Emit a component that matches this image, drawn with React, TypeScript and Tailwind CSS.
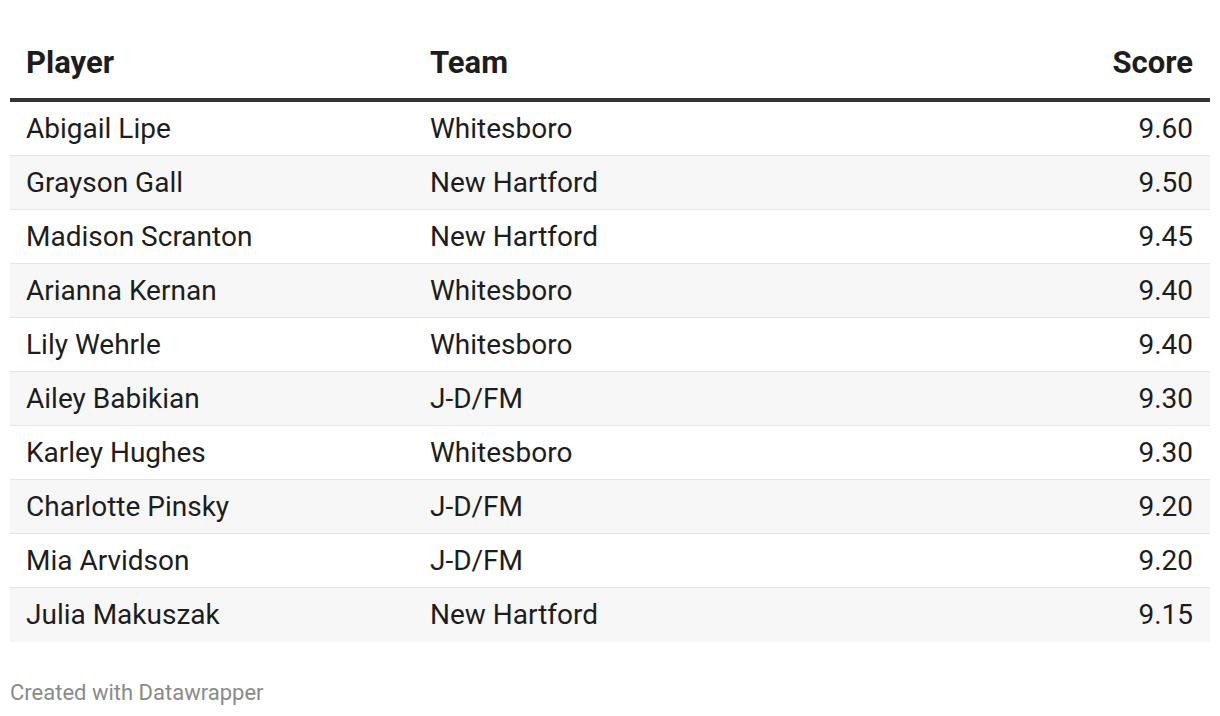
const rows = [
  ["Abigail Lipe", "Whitesboro", "9.60"],
  ["Grayson Gall", "New Hartford", "9.50"],
  ["Madison Scranton", "New Hartford", "9.45"],
  ["Arianna Kernan", "Whitesboro", "9.40"],
  ["Lily Wehrle", "Whitesboro", "9.40"],
  ["Ailey Babikian", "J-D/FM", "9.30"],
  ["Karley Hughes", "Whitesboro", "9.30"],
  ["Charlotte Pinsky", "J-D/FM", "9.20"],
  ["Mia Arvidson", "J-D/FM", "9.20"],
  ["Julia Makuszak", "New Hartford", "9.15"],
];

export default function App() {
  return (
    <div className="w-[1220px] h-[716px] bg-white px-[10px] pt-[40px] font-['Roboto',sans-serif] text-[#1d1d1d]">
      <div className="flex h-[62px] items-start border-b-[4px] border-[#333333] pl-[16px] pr-[17px] pt-[5px] text-[31px] leading-[36px] font-bold">
        <div className="w-[404px]">Player</div>
        <div className="flex-1">Team</div>
        <div className="text-right">Score</div>
      </div>
      {rows.map((r, i) => (
        <div
          key={r[0]}
          className={`flex h-[54px] items-center pl-[16px] pr-[17px] text-[28px] ${i % 2 === 1 ? "bg-[#f7f7f7]" : "bg-white"} ${i < rows.length - 1 ? "border-b border-[#e6e6e6]" : ""}`}
        >
          <div className="w-[404px]">{r[0]}</div>
          <div className="flex-1">{r[1]}</div>
          <div className="text-right">{r[2]}</div>
        </div>
      ))}
      <div className="mt-[34px] text-[22px] text-[#8a8a8a]">Created with Datawrapper</div>
    </div>
  );
}
